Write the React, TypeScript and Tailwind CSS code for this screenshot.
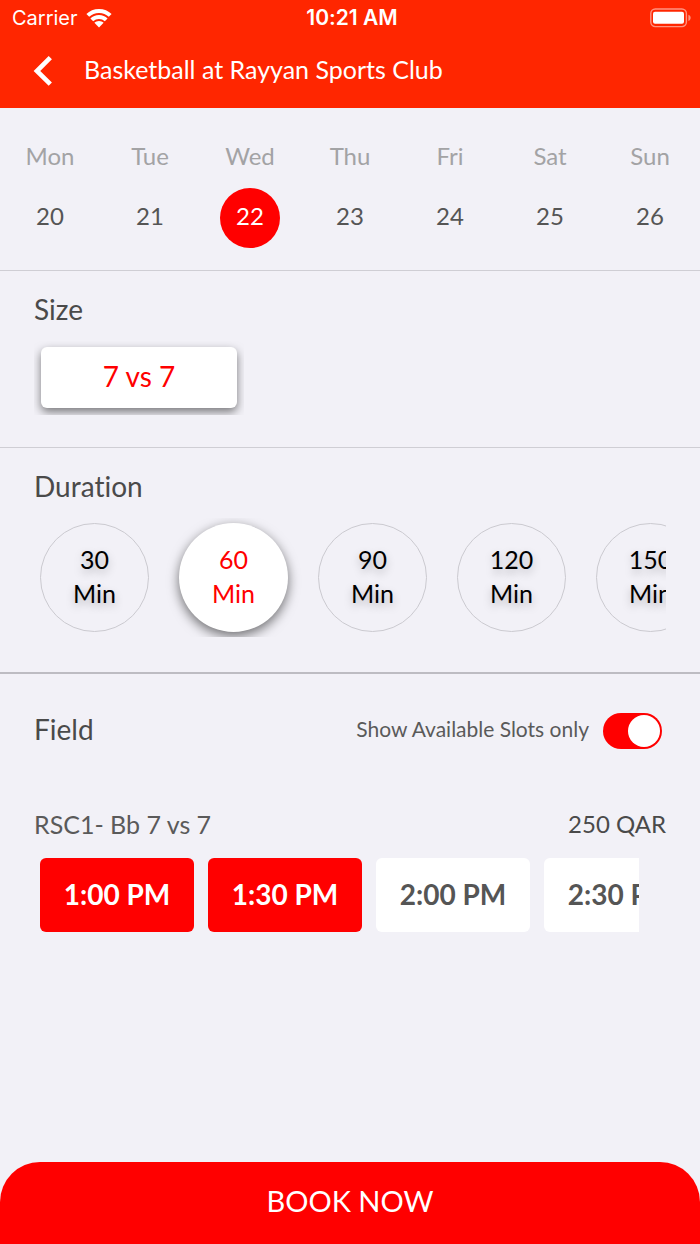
import React, { useState } from 'react';

const days = [
  { label: 'Mon', date: 20 },
  { label: 'Tue', date: 21 },
  { label: 'Wed', date: 22 },
  { label: 'Thu', date: 23 },
  { label: 'Fri', date: 24 },
  { label: 'Sat', date: 25 },
  { label: 'Sun', date: 26 },
];

const durations = [30, 60, 90, 120, 150];

const slots = [
  { time: '1:00 PM', selected: true },
  { time: '1:30 PM', selected: true },
  { time: '2:00 PM', selected: false },
  { time: '2:30 PM', selected: false },
];

function WifiIcon() {
  return (
    <svg className="w-[26px] h-[19px]" viewBox="0 0 26 19" fill="white">
      <path d="M13 0C8 0 3.600 1.900 0.400 5L3.200 7.800A14 14 0 0 1 13 3.900a14 14 0 0 1 9.800 3.900L25.600 5C22.400 1.900 18 0 13 0Z" />
      <path d="M13 6c-3.400 0-6.400 1.300-8.600 3.400l2.800 2.800a8.400 8.400 0 0 1 11.600 0l2.800-2.800C19.400 7.300 16.400 6 13 6Z" />
      <path d="M13 12c-1.800 0-3.400.7-4.600 1.800L13 18.400l4.600-4.600C16.400 12.700 14.800 12 13 12Z" />
    </svg>
  );
}

function BatteryIcon() {
  return (
    <svg className="w-[42px] h-5" viewBox="0 0 42 20" fill="none">
      <rect x="0.8" y="1" width="35.6" height="17.6" rx="4.5" stroke="white" strokeOpacity="0.5" strokeWidth="1.4" />
      <rect x="3" y="3.8" width="31" height="12" rx="2" fill="white" />
      <path d="M38.4 6.8c3 .9 3 5.3 0 6.2Z" fill="white" fillOpacity="0.5" />
    </svg>
  );
}

function Header() {
  return (
    <header className="bg-[#ff2600] text-white">
      <div className="grid grid-cols-3 items-center h-9 pl-3 pr-2 font-['Inter',sans-serif] text-xl">
        <div className="flex items-center gap-2">
          <span>Carrier</span>
          <WifiIcon />
        </div>
        <span className="text-center text-[21px] font-semibold whitespace-nowrap">10:21 AM</span>
        <div className="flex justify-end">
          <BatteryIcon />
        </div>
      </div>
      <div className="flex items-center h-[72px] pl-8 gap-8">
        <button aria-label="Back" className="w-5 h-8">
          <svg className="w-5 h-8" viewBox="0 0 20 32" fill="none" stroke="white" strokeWidth="4.6">
            <path d="M18.3 1.7 4.9 15l13.4 13.200" />
          </svg>
        </button>
        <h1 className="text-[25px] pb-1">Basketball at Rayyan Sports Club</h1>
      </div>
    </header>
  );
}

export default function App() {
  const [selectedDate, setSelectedDate] = useState(22);
  const [duration, setDuration] = useState(60);
  const [availableOnly, setAvailableOnly] = useState(true);
  const [selectedSlots, setSelectedSlots] = useState(slots.filter((s) => s.selected).map((s) => s.time));

  const toggleSlot = (time: string) => {
    setSelectedSlots((prev) => (prev.includes(time) ? prev.filter((t) => t !== time) : [...prev, time]));
  };

  return (
    <div className="flex flex-col min-h-screen bg-[#f2f1f7] text-[#4a4a4a] font-['Lato',sans-serif] [font-variant-ligatures:none]">
      <Header />

      <section className="grid grid-cols-7 pt-8 pb-[22px] border-b border-[#cfced4]">
        {days.map((day) => (
          <button
            key={day.date}
            onClick={() => setSelectedDate(day.date)}
            className="flex flex-col items-center gap-4 text-2xl"
          >
            <span className="leading-8 text-[#a3a3a5]">{day.label}</span>
            <span
              className={`flex items-center justify-center size-[60px] rounded-full pb-1 ${
                selectedDate === day.date ? 'bg-[#ff0000] text-white' : 'text-[#555555]'
              }`}
            >
              {day.date}
            </span>
          </button>
        ))}
      </section>

      <section className="px-[34px] pt-[22px] pb-8 border-b border-[#cfced4]">
        <h2 className="text-[28px] leading-8">Size</h2>
        <div className="mt-4 w-fit overflow-hidden px-[7px] pt-[6px] pb-[7px]">
          <button className="w-[196px] h-[61px] pb-1 rounded-md bg-white text-[#ff0000] text-[28px] shadow-[0_4px_10px_rgba(0,0,0,0.5)]">
            7 vs 7
          </button>
        </div>
      </section>

      <section className="px-[34px] pt-[22px] pb-[35px] border-b-2 border-[#bdbcc2]">
        <h2 className="text-[28px] leading-8">Duration</h2>
        <div className="mt-4 flex gap-[30px] overflow-x-auto [scrollbar-width:none] px-[6px] py-[5px]">
          {durations.map((minutes) => (
            <button
              key={minutes}
              onClick={() => setDuration(minutes)}
              className={`shrink-0 size-[109px] rounded-full pb-1 text-[25px] leading-[34px] ${
                duration === minutes
                  ? 'bg-white text-[#ff0000] shadow-[0_4px_12px_rgba(0,0,0,0.55)]'
                  : 'border border-[#cbcad0] text-black text-shadow-[0_4px_8px_rgba(0,0,0,0.25)]'
              }`}
            >
              {minutes}
              <br />
              Min
            </button>
          ))}
        </div>
      </section>

      <section className="px-[34px] pt-[39px] pb-8">
        <div className="flex items-center justify-between">
          <h2 className="text-[28px] leading-8 pb-1">Field</h2>
          <label className="flex items-center gap-3.5 mr-1 text-[21px] text-[#5a5a5a]">
            <span className="pb-1">Show Available Slots only</span>
            <input
              type="checkbox"
              role="switch"
              checked={availableOnly}
              onChange={(e) => setAvailableOnly(e.target.checked)}
              className="appearance-none w-[59px] h-9 rounded-full bg-gray-300 checked:bg-[#ff0000] p-0.5 before:block before:size-8 before:rounded-full before:bg-white checked:before:ml-[23px]"
            />
          </label>
        </div>

        <div className="flex items-center justify-between mt-[59px] leading-8">
          <h3 className="text-[25px] text-[#5a5a5a]">RSC1- Bb 7 vs 7</h3>
          <span className="text-2xl">250 QAR</span>
        </div>
        <div className="flex gap-3.5 mt-[18px] pl-[6px] mr-[27px] overflow-x-auto [scrollbar-width:none]">
          {slots.map(({ time }) => (
            <button
              key={time}
              onClick={() => toggleSlot(time)}
              className={`shrink-0 w-[154px] h-[74px] rounded-md pb-0.5 text-[28px] font-bold ${
                selectedSlots.includes(time) ? 'bg-[#ff0000] text-white' : 'bg-white text-[#555555]'
              }`}
            >
              {time}
            </button>
          ))}
        </div>
      </section>

      <button className="mt-auto h-[82px] pb-1 rounded-t-[40px] bg-[#ff0000] text-white text-[29px]">BOOK NOW</button>
    </div>
  );
}
